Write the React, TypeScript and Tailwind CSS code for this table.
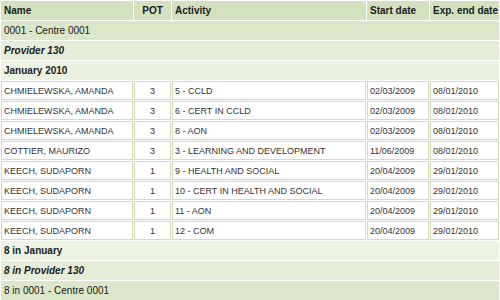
import React from "react";

const rows = [
  ["CHMIELEWSKA, AMANDA", "3", "5 - CCLD", "02/03/2009", "08/01/2010"],
  ["CHMIELEWSKA, AMANDA", "3", "6 - CERT IN CCLD", "02/03/2009", "08/01/2010"],
  ["CHMIELEWSKA, AMANDA", "3", "8 - AON", "02/03/2009", "08/01/2010"],
  ["COTTIER, MAURIZO", "3", "3 - LEARNING AND DEVELOPMENT", "11/06/2009", "08/01/2010"],
  ["KEECH, SUDAPORN", "1", "9 - HEALTH AND SOCIAL", "20/04/2009", "29/01/2010"],
  ["KEECH, SUDAPORN", "1", "10 - CERT IN HEALTH AND SOCIAL", "20/04/2009", "29/01/2010"],
  ["KEECH, SUDAPORN", "1", "11 - AON", "20/04/2009", "29/01/2010"],
  ["KEECH, SUDAPORN", "1", "12 - COM", "20/04/2009", "29/01/2010"],
];

const th = "h-[19px] bg-[#d4e1bf] border border-[#d4e1bf] px-[2px] py-0 text-left font-bold text-[10px] leading-[12px] text-[#1a1a1a] align-middle whitespace-nowrap";
const td = "h-[19px] bg-white border border-[#d0dfb9] px-[2px] py-0 text-[9px] leading-[12px] text-[#333333] align-middle whitespace-nowrap";
const grp = "h-[19px] border px-[2px] py-0 text-[10px] leading-[12px] text-[#1a1a1a] align-middle whitespace-nowrap";

export default function App() {
  return (
    <div className="w-[500px] h-[300px] overflow-hidden bg-white" style={{ fontFamily: '"Liberation Sans", Arial, sans-serif' }}>
      <table className="w-[500px] table-fixed border-separate border-spacing-[1px]">
        <colgroup>
          <col className="w-[132px]" />
          <col className="w-[37px]" />
          <col className="w-[194px]" />
          <col className="w-[62px]" />
          <col className="w-[69px]" />
        </colgroup>
        <thead>
          <tr>
            <th className={th}>Name</th>
            <th className={th + " !text-center"}>POT</th>
            <th className={th}>Activity</th>
            <th className={th}>Start date</th>
            <th className={th + " overflow-visible"}>Exp. end date</th>
          </tr>
        </thead>
        <tbody>
          <tr>
            <td colSpan={5} className={grp + " bg-[#dce6c9] border-[#dce6c9]"}>0001 - Centre 0001</td>
          </tr>
          <tr>
            <td colSpan={5} className={grp + " bg-[#e5edd8] border-[#e5edd8] font-bold italic"}>Provider 130</td>
          </tr>
          <tr>
            <td colSpan={5} className={grp + " bg-[#ecf2e2] border-[#ecf2e2] font-bold"}>January 2010</td>
          </tr>
          {rows.map((r, i) => (
            <tr key={i}>
              <td className={td}>{r[0]}</td>
              <td className={td + " text-center"}>{r[1]}</td>
              <td className={td}>{r[2]}</td>
              <td className={td}>{r[3]}</td>
              <td className={td}>{r[4]}</td>
            </tr>
          ))}
          <tr>
            <td colSpan={5} className={grp + " bg-[#edf3e3] border-[#edf3e3] font-bold"}>8 in January</td>
          </tr>
          <tr>
            <td colSpan={5} className={grp + " bg-[#e5edd8] border-[#e5edd8] font-bold italic"}>8 in Provider 130</td>
          </tr>
          <tr>
            <td colSpan={5} className={grp + " bg-[#dce6c8] border-[#dce6c8]"}>8 in 0001 - Centre 0001</td>
          </tr>
        </tbody>
      </table>
    </div>
  );
}
